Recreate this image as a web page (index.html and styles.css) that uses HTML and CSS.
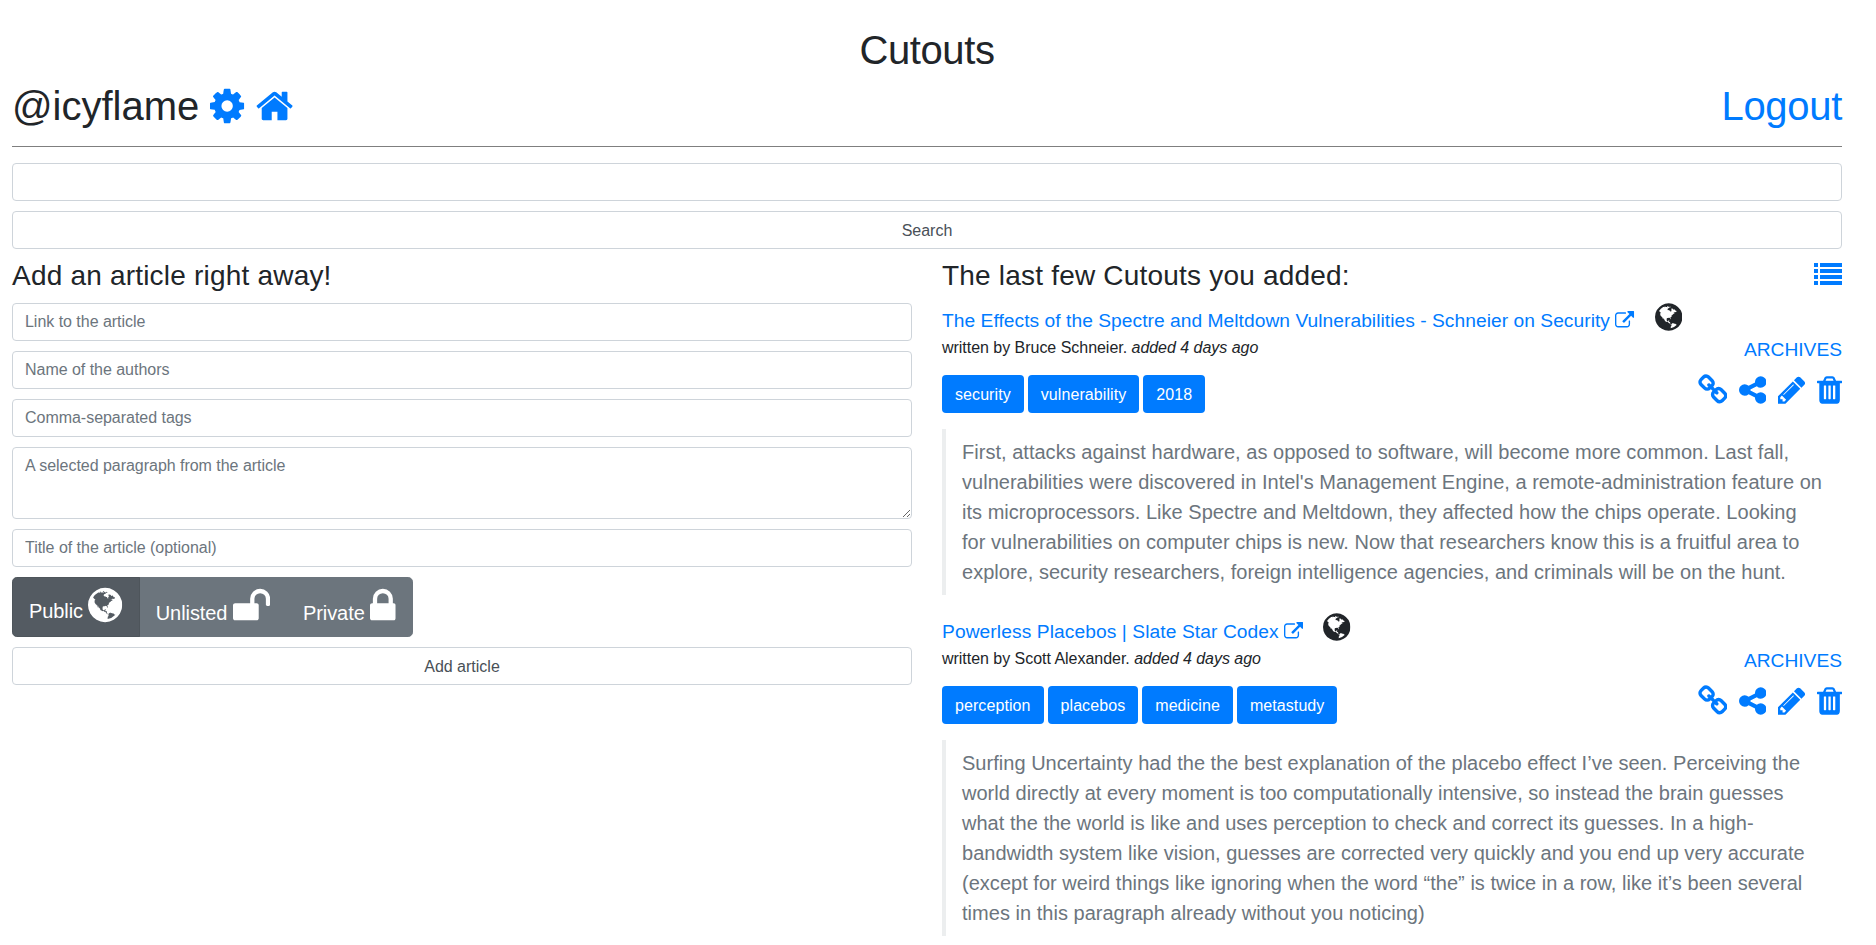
FILE: index.html
```html
<!DOCTYPE html>
<html lang="en">
<head>
<meta charset="utf-8">
<title>Cutouts</title>
<link rel="stylesheet" href="styles.css">
</head>
<body>
<svg class="sprite" aria-hidden="true">
  <symbol id="cog" viewBox="128 0 1536 1792"><path d="M1152 896q0-106-75-181t-181-75-181 75-75 181 75 181 181 75 181-75 75-181zm512-109v222q0 12-8 23t-20 13l-185 28q-19 54-39 91 35 50 107 138 10 12 10 25t-9 23q-27 37-99 108t-94 71q-12 0-26-9l-138-108q-44 23-91 38-16 136-29 186-7 28-36 28h-222q-14 0-24.5-8.5t-11.5-21.5l-28-184q-49-16-90-37l-141 107q-10 9-25 9-14 0-25-11-126-114-165-168-7-10-7-23 0-12 8-23 15-21 51-66.5t54-70.5q-27-50-41-99l-183-27q-13-2-21-12.5t-8-23.5v-222q0-12 8-23t19-13l186-28q14-46 39-92-40-57-107-138-10-12-10-24 0-10 9-23 26-36 98.5-107.5t94.5-71.5q13 0 26 10l138 107q44-23 91-38 16-136 29-186 7-28 36-28h222q14 0 24.5 8.5t11.5 21.5l28 184q49 16 90 37l142-107q9-9 24-9 13 0 25 10 129 119 165 170 7 8 7 22 0 12-8 23-15 21-51 66.5t-54 70.5q26 50 41 98l183 28q13 2 21 12.5t8 23.5z"/></symbol>
  <symbol id="home" viewBox="64 0 1664 1792"><path d="M1472 992v480q0 26-19 45t-45 19h-384v-384h-256v384h-384q-26 0-45-19t-19-45v-480q0-1 .5-3t.5-3l575-474 575 474q1 2 1 6zm223-69l-62 74q-8 9-21 11h-3q-13 0-21-7l-692-577-692 577q-12 8-24 7-13-2-21-11l-62-74q-8-10-7-23.5t11-21.5l719-599q32-26 76-26t76 26l244 204v-195q0-14 9-23t23-9h192q14 0 23 9t9 23v408l219 182q10 8 11 21.5t-7 23.5z"/></symbol>
  <symbol id="globe" viewBox="128 0 1536 1792"><path d="M896 128q209 0 385.5 103t279.5 279.5 103 385.5-103 385.5-279.5 279.5-385.5 103-385.5-103-279.5-279.5-103-385.5 103-385.5 279.5-279.5 385.5-103zm274 521q-2 1-9.5 9.5t-13.5 9.5q2 0 4.5-5t5-11 3.5-7q6-7 22-15 14-6 52-12 34-8 51 11-2-2 9.5-13t14.5-12q3-2 15-4.5t15-7.5l2-22q-12 1-17.5-7t-6.5-21q0 2-6 8 0-7-4.5-8t-11.5 1-9 1q-10-3-15-7.5t-8-16.5-4-15q-2-5-9.5-11t-9.5-10q-1-2-2.5-5.5t-3-6.5-4-5.5-5.5-2.5-7 5-7.5 10-4.5 5q-3-2-6-1.5t-4.5 1-4.5 3-5 3.5q-3 2-8.5 3t-8.5 2q15-5-1-11-10-4-16-3 9-4 7.5-12t-8.5-14h5q-1-4-8.5-8.5t-17.5-8.5-13-6q-8-5-34-9.5t-33-.5q-5 6-4.5 10.5t4 14 3.5 12.5q1 6-5.5 13t-6.5 12q0 7 14 15.5t10 21.5q-3 8-16 16t-16 12q-5 8-1.5 18.5t10.5 16.5q2 2 1.5 4t-3.5 4.5-5.5 4-6.5 3.5l-3 2q-11 5-20.5-6t-13.5-26q-7-25-16-30-23-8-29 1-5-13-41-26-25-9-58-4 6-1 0-15-7-15-19-12 3-6 4-17.5t1-13.5q3-13 12-23 1-1 7-8.5t9.5-13.5.5-6q35 4 50-11 5-5 11.5-17t10.5-17q9-6 14-5.5t14.5 5.5 14.5 5q14 1 15.5-11t-7.5-20q12 1 3-17-4-7-8-9-12-4-27 5-8 4 2 8-1-1-9.5 10.5t-16.5 17.5-16-5q-1-1-5.5-13.5t-9.5-13.5q-8 0-16 15 3-8-11-15t-24-8q19-12-8-27-7-4-20.5-5t-19.5 4q-5 7-5.5 11.5t5 8 10.5 5.5 11.5 4 8.5 3q14 10 8 14-2 1-8.5 3.5t-11.5 4.5-6 4q-3 4 0 14t-2 14q-5-5-9-17.5t-7-16.5q7 9-25 6l-10-1q-4 0-16 2t-20.5 1-13.5-8q-4-8 0-20 1-4 4-2-4-3-11-9.5t-10-8.5q-46 15-94 41 6 1 12-1 5-2 13-6.5t10-5.5q34-14 42-7l5-5q14 16 20 25-7-4-30-1-20 6-22 12 7 12 5 18-4-3-11.5-10t-14.5-11-15-5q-16 0-22 1-146 80-235 222 7 7 12 8 4 1 5 9t2.5 11 11.5-3q9 8 3 19 1-1 44 27 19 17 21 21 3 11-10 18-1-2-9-9t-9-4q-3 5 .5 18.5t10.5 12.5q-7 0-9.5 16t-2.5 35.5-1 23.5l2 1q-3 12 5.5 34.5t21.5 19.5q-13 3 20 43 6 8 8 9 3 2 12 7.5t15 10 10 10.5q4 5 10 22.5t14 23.5q-2 6 9.5 20t10.5 23q-1 0-2.5 1t-2.5 1q3 7 15.5 14t15.5 13q1 3 2 10t3 11 8 2q2-20-24-62-15-25-17-29-3-5-5.5-15.5t-4.5-14.5q2 0 6 1.5t8.5 3.5 7.5 4 2 3q-3 7 2 17.5t12 18.5 17 19 12 13q6 6 14 19.5t0 13.5q9 0 20 10t17 20q5 8 8 26t5 24q2 7 8.5 13.5t12.5 9.5l16 8 13 7q5 2 18.5 10.5t21.5 11.5q10 4 16 4t14.5-2.5 13.5-3.5q15-2 29 15t21 21q36 19 55 11-2 1 .5 7.5t8 15.5 9 14.5 5.5 8.5q5 6 18 15t18 15q6-4 7-9-3 8 7 20t18 10q14-3 14-32-31 15-49-18 0-1-2.5-5.5t-4-8.5-2.5-8.5 0-7.5 5-3q9 0 10-3.5t-2-12.5-4-13q-1-8-11-20t-12-15q-5 9-16 8t-16-9q0 1-1.5 5.5t-1.5 6.5q-13 0-15-1 1-3 2.5-17.5t3.5-22.5q1-4 5.5-12t7.5-14.5 4-12.5-4.5-9.5-17.5-2.5q-19 1-26 20-1 3-3 10.5t-5 11.5-9 7q-7 3-24 2t-24-5q-13-8-22.5-29t-9.5-37q0-10 2.5-26.5t3-25-5.5-24.5q3-2 9-9.5t10-10.5q2-1 4.5-1.5t4.5 0 4-1.5 3-6q-1-1-4-3-3-3-4-3 7 3 28.5-1.5t27.5 1.5q15 11 22-2 0-1-2.5-9.5t-.5-13.5q5 27 29 9 3 3 15.5 5t17.5 5q3 2 7 5.5t5.5 4.5 5-.5 8.5-6.5q10 14 12 24 11 40 19 44 7 3 11 2t4.5-9.5 0-14-1.5-12.5l-1-8v-18l-1-8q-15-3-18.5-12t1.5-18.5 15-18.5q1-1 8-3.5t15.5-6.5 12.5-8q21-19 15-35 7 0 11-9-1 0-5-3t-7.5-5-4.5-2q9-5 2-16 5-3 7.5-11t7.5-10q9 12 21 2 7-8 1-16 5-7 20.5-10.5t18.5-9.5q7 2 8-2t1-12 3-12q4-5 15-9t13-5l17-11q3-4 0-4 18 2 31-11 10-11-6-20 3-6-3-9.5t-15-5.5q3-1 11.5-.5t10.5-1.5q15-10-7-16-17-5-43 12zm-163 877q206-36 351-189-3-3-12.5-4.5t-12.5-3.5q-18-7-24-8 1-7-2.5-13t-8-9-12.5-8-11-7q-2-2-7-6t-7-5.5-7.5-4.5-8.5-2-10 1l-3 1q-3 1-5.5 2.5t-5.5 3-4 3 0 2.5q-21-17-36-22-5-1-11-5.5t-10.5-7-10-1.5-11.5 7q-5 5-6 15t-2 13q-7-5 0-17.5t2-18.5q-3-6-10.5-4.5t-12 4.5-11.5 8.5-9 6.5-8.5 5.5-8.5 7.5q-3 4-6 12t-5 11q-2-4-11.5-6.5t-9.5-5.5q2 10 4 35t5 38q7 31-12 48-27 25-29 40-4 22 12 26 0 7-8 20.5t-7 21.5q0 6 2 16z"/></symbol>
  <symbol id="unlock" viewBox="64 0 1664 1792"><path d="M1728 576v256q0 26-19 45t-45 19h-64q-26 0-45-19t-19-45v-256q0-106-75-181t-181-75-181 75-75 181v192h96q40 0 68 28t28 68v576q0 40-28 68t-68 28h-960q-40 0-68-28t-28-68v-576q0-40 28-68t68-28h672v-192q0-185 131.500-316.500t316.500-131.500 316.500 131.500 131.500 316.500z"/></symbol>
  <symbol id="lock" viewBox="320 0 1152 1792"><path d="M640 768h512v-192q0-106-75-181t-181-75-181 75-75 181v192zm832 96v576q0 40-28 68t-68 28h-960q-40 0-68-28t-28-68v-576q0-40 28-68t68-28h32v-192q0-184 132-316t316-132 316 132 132 316v192h32q40 0 68 28t28 68z"/></symbol>
  <symbol id="external" viewBox="0 0 1792 1792"><path d="M1408 928v320q0 119-84.500 203.500t-203.500 84.500h-832q-119 0-203.500-84.500t-84.500-203.500v-832q0-119 84.500-203.500t203.500-84.500h704q14 0 23 9t9 23v64q0 14-9 23t-23 9h-704q-66 0-113 47t-47 113v832q0 66 47 113t113 47h832q66 0 113-47t47-113v-320q0-14 9-23t23-9h64q14 0 23 9t9 23zm384-864v512q0 26-19 45t-45 19-45-19l-176-176-652 652q-10 10-23 10t-23-10l-114-114q-10-10-10-23t10-23l652-652-176-176q-19-19-19-45t19-45 45-19h512q26 0 45 19t19 45z"/></symbol>
  <symbol id="list" viewBox="0 0 28 22"><path d="M0 0h4v4H0zM6 0h22v4H6zM0 6h4v4H0zM6 6h22v4H6zM0 12h4v4H0zM6 12h22v4H6zM0 18h4v4H0zM6 18h22v4H6z"/></symbol>
  <symbol id="link" viewBox="64 0 1664 1792"><path d="M1520 1216q0-40-28-68l-208-208q-28-28-68-28-42 0-72 32 3 3 19 18.500t21.500 21.500 15 19 13 25.500 3.500 27.500q0 40-28 68t-68 28q-15 0-27.500-3.500t-25.500-13-19-15-21.500-21.500-18.500-19q-33 31-33 73 0 40 28 68l206 207q27 27 68 27 40 0 68-26l147-146q28-28 28-67zm-703-705q0-40-28-68l-206-207q-28-28-68-28-39 0-68 27l-147 146q-28 28-28 67 0 40 28 68l208 208q27 27 68 27 42 0 72-31-3-3-19-18.500t-21.500-21.500-15-19-13-25.500-3.500-27.500q0-40 28-68t68-28q15 0 27.500 3.500t25.500 13 19 15 21.500 21.500 18.500 19q33-31 33-73zm895 705q0 120-85 203l-147 146q-83 83-203 83-121 0-204-85l-206-207q-83-83-83-203 0-123 88-209l-88-88q-86 88-208 88-120 0-204-84l-208-208q-84-84-84-204t85-203l147-146q83-83 203-83 121 0 204 85l206 207q83 83 83 203 0 123-88 209l88 88q86-88 208-88 120 0 204 84l208 208q84 84 84 204z"/></symbol>
  <symbol id="share" viewBox="128 0 1536 1792"><path d="M1344 1024q133 0 226.500 93.500t93.500 226.500-93.500 226.500-226.500 93.500-226.500-93.500-93.500-226.500q0-12 2-34l-360-180q-92 86-218 86-133 0-226.500-93.500t-93.500-226.500 93.500-226.500 226.500-93.500q126 0 218 86l360-180q-2-22-2-34 0-133 93.500-226.500t226.500-93.500 226.500 93.500 93.500 226.500-93.500 226.500-226.500 93.500q-126 0-218-86l-360 180q2 22 2 34t-2 34l360 180q92-86 218-86z"/></symbol>
  <symbol id="pencil" viewBox="128 0 1536 1792"><path d="M491 1536l91-91-235-235-91 91v107h128v128h107zm523-928q0-22-22-22-10 0-17 7l-542 542q-7 7-7 17 0 22 22 22 10 0 17-7l542-542q7-7 7-17zm-54-192l416 416-832 832h-416v-416zm683 96q0 53-37 90l-166 166-416-416 166-165q36-38 90-38 53 0 91 38l235 234q37 39 37 91z"/></symbol>
  <symbol id="trash" viewBox="192 0 1408 1792"><path d="M704 1376v-704q0-14-9-23t-23-9h-64q-14 0-23 9t-9 23v704q0 14 9 23t23 9h64q14 0 23-9t9-23zm256 0v-704q0-14-9-23t-23-9h-64q-14 0-23 9t-9 23v704q0 14 9 23t23 9h64q14 0 23-9t9-23zm256 0v-704q0-14-9-23t-23-9h-64q-14 0-23 9t-9 23v704q0 14 9 23t23 9h64q14 0 23-9t9-23zm-544-992h448l-48-117q-7-9-17-11h-317q-10 2-17 11zm928 32v64q0 14-9 23t-23 9h-96v948q0 83-47 143.500t-113 60.500h-832q-66 0-113-58.500t-47-141.500v-952h-96q-14 0-23-9t-9-23v-64q0-14 9-23t23-9h309l70-167q15-37 54-63t79-26h320q40 0 79 26t54 63l70 167h309q14 0 23 9t9 23z"/></symbol>
</svg>
<div class="page">
  <h1 class="brand">Cutouts</h1>
  <header class="userbar">
    <h1>@icyflame <a href="#"><svg class="icon w1536"><use href="#cog"/></svg></a> <a href="#"><svg class="icon w1664"><use href="#home"/></svg></a></h1>
    <h1 class="logout"><a href="#">Logout</a></h1>
  </header>
  <form class="search">
    <input class="control" type="text">
    <button class="control" type="button">Search</button>
  </form>
  <main class="columns">
    <section>
      <h3>Add an article right away!</h3>
      <form class="stack">
        <input class="control" type="text" placeholder="Link to the article">
        <input class="control" type="text" placeholder="Name of the authors">
        <input class="control" type="text" placeholder="Comma-separated tags">
        <textarea class="control area" placeholder="A selected paragraph from the article"></textarea>
        <input class="control" type="text" placeholder="Title of the article (optional)">
        <div class="visibility">
          <label class="choice active">Public <svg class="icon w1536"><use href="#globe"/></svg></label>
          <label class="choice">Unlisted <svg class="icon w1664"><use href="#unlock"/></svg></label>
          <label class="choice">Private <svg class="icon w1152"><use href="#lock"/></svg></label>
        </div>
        <button class="control" type="button">Add article</button>
      </form>
    </section>
    <section>
      <div class="heading"><h3>The last few Cutouts you added:</h3><a href="#"><svg class="list-icon"><use href="#list"/></svg></a></div>
      <article class="cutout">
        <div class="summary">
          <div>
            <div class="title"><a href="#">The Effects of the Spectre and Meltdown Vulnerabilities - Schneier on Security <svg class="icon w1792"><use href="#external"/></svg></a><svg class="icon w1536 scope"><use href="#globe"/></svg></div>
            <div class="byline">written by Bruce Schneier. <em>added 4 days ago</em></div>
            <div class="tags"><a href="#">security</a><a href="#">vulnerability</a><a href="#">2018</a></div>
          </div>
          <div class="side">
            <a class="archives" href="#">ARCHIVES</a>
            <div class="actions"><a href="#"><svg class="icon w1664"><use href="#link"/></svg></a><a href="#"><svg class="icon w1536"><use href="#share"/></svg></a><a href="#"><svg class="icon w1536"><use href="#pencil"/></svg></a><a href="#"><svg class="icon w1408"><use href="#trash"/></svg></a></div>
          </div>
        </div>
        <blockquote>First, attacks against hardware, as opposed to software, will become more common. Last fall, vulnerabilities were discovered in Intel's Management Engine, a remote-administration feature on its microprocessors. Like Spectre and Meltdown, they affected how the chips operate. Looking<br>for vulnerabilities on computer chips is new. Now that researchers know this is a fruitful area to explore, security researchers, foreign intelligence agencies, and criminals will be on the hunt.</blockquote>
      </article>
      <article class="cutout">
        <div class="summary">
          <div>
            <div class="title short"><a href="#">Powerless Placebos | Slate Star Codex <svg class="icon w1792"><use href="#external"/></svg></a><svg class="icon w1536 scope"><use href="#globe"/></svg></div>
            <div class="byline">written by Scott Alexander. <em>added 4 days ago</em></div>
            <div class="tags"><a href="#">perception</a><a href="#">placebos</a><a href="#">medicine</a><a href="#">metastudy</a></div>
          </div>
          <div class="side">
            <a class="archives" href="#">ARCHIVES</a>
            <div class="actions"><a href="#"><svg class="icon w1664"><use href="#link"/></svg></a><a href="#"><svg class="icon w1536"><use href="#share"/></svg></a><a href="#"><svg class="icon w1536"><use href="#pencil"/></svg></a><a href="#"><svg class="icon w1408"><use href="#trash"/></svg></a></div>
          </div>
        </div>
        <blockquote>Surfing Uncertainty had the the best explanation of the placebo effect I’ve seen. Perceiving the world directly at every moment is too computationally intensive, so instead the brain guesses what the the world is like and uses perception to check and correct its guesses. In a high-bandwidth system like vision, guesses are corrected very quickly and you end up very accurate (except for weird things like ignoring when the word “the” is twice in a row, like it’s been several times in this paragraph already without you noticing)</blockquote>
      </article>
    </section>
  </main>
</div>
</body>
</html>
```

FILE: styles.css
```css
* { box-sizing: border-box; }
body {
  margin: 0;
  background: #fff;
  color: #212529;
  font: 16px/1.5 "Liberation Sans", Arial, sans-serif;
}
a { color: #007bff; text-decoration: none; }
h1, h3 { margin: 0; font-weight: 400; line-height: 1.2; }
h1 { font-size: 40px; }
h3 { font-size: 28px; letter-spacing: 0.2px; }
.sprite { display: none; }
.page { height: 945px; overflow: hidden; padding: 26px 34px 0 12px; }
.brand { text-align: center; letter-spacing: -0.4px; }
.logout { letter-spacing: -0.3px; }

.icon { height: 1em; vertical-align: -0.143em; fill: currentColor; }
.w1152 { width: 0.643em; }
.w1408 { width: 0.786em; }
.w1536 { width: 0.857em; }
.w1664 { width: 0.929em; }
.w1792 { width: 1em; }

.userbar {
  display: flex;
  justify-content: space-between;
  height: 65px;
  margin: 8px 0 16px;
  border-bottom: 1px solid #7f7f7f;
}
.search, .stack { display: flex; flex-direction: column; gap: 10px; }
.control {
  display: block;
  width: 100%;
  height: 38px;
  margin: 0;
  padding: 6px 12px;
  border: 1px solid #ced4da;
  border-radius: 4px;
  background: #fff;
  color: #495057;
  font: inherit;
}
button.control { padding-top: 7px; padding-bottom: 5px; }
.control::placeholder { color: #6c757d; opacity: 1; letter-spacing: -0.03px; }
.area { height: 72px; resize: vertical; }

.columns {
  display: grid;
  grid-template-columns: 1fr 1fr;
  gap: 30px;
  margin-top: 10px;
}
.columns h3 { height: 44px; }
.columns .heading, .columns .heading h3 { height: 36px; }
.heading { display: flex; justify-content: space-between; }
.list-icon { display: block; width: 28px; height: 22px; margin-top: 4px; fill: currentColor; }

.visibility { display: flex; height: 60px; }
.choice {
  height: 60px;
  padding: 8px 16px 0;
  border: 1px solid #6c757d;
  background: #6c757d;
  color: #fff;
  font-size: 20px;
  line-height: 40px;
  letter-spacing: -0.08px;
  white-space: nowrap;
}
.choice + .choice { margin-left: -1px; }
.choice .icon { font-size: 40px; }
.choice:first-child { border-radius: 4.800px 0 0 4.800px; }
.choice:last-child { border-radius: 0 4.800px 4.800px 0; }
.choice.active { position: relative; padding-top: 7px; background: #545b62; border-color: #4e555b; }
.choice.active .icon { vertical-align: -7.500px; }

.cutout { height: 311px; padding-top: 1px; }
.summary { display: flex; justify-content: space-between; height: 133px; }
.title { display: flex; align-items: flex-start; height: 40px; font-size: 19.200px; line-height: 38px; white-space: nowrap; }
.title a { margin-top: 6px; letter-spacing: 0.045px; }
.title.short a { letter-spacing: 0.090px; }
.scope { margin: 5px 0 0 20px; font-size: 32px; }
.title.short .scope { margin-top: 4px; }
.byline { height: 24px; margin-bottom: 15px; letter-spacing: -0.03px; }
.tags { display: flex; gap: 4px; }
.tags a {
  height: 38px;
  padding: 8px 13px 6px;
  border-radius: 4px;
  background: #007bff;
  color: #fff;
  letter-spacing: 0.080px;
}
.side { padding-top: 39px; text-align: right; }
.archives { display: block; height: 39px; font-size: 19.200px; line-height: 30px; }
.actions { display: flex; gap: 11.600px; font-size: 32px; }
.actions .icon { display: block; }
blockquote {
  margin: 0;
  padding: 8px 16px;
  border-left: 4px solid #eceeef;
  color: #6c757d;
  font-size: 20px;
  line-height: 30px;
  letter-spacing: 0.025px;
}
```
